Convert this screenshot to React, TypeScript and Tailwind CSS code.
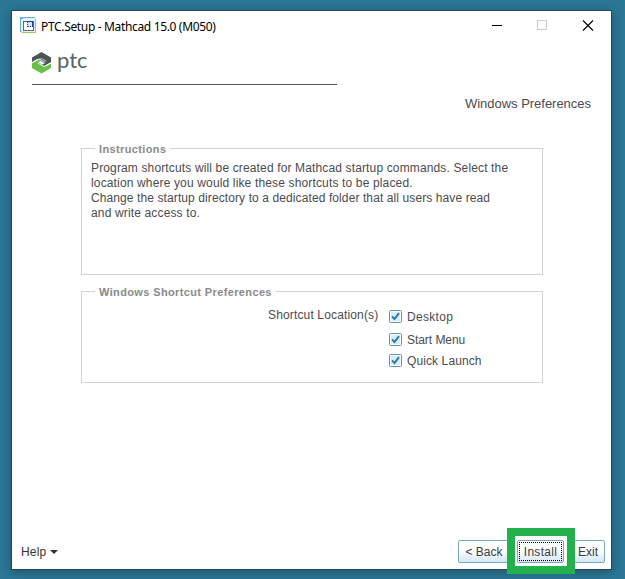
import { type ReactNode } from "react";

const INSTRUCTIONS = [
  { text: "Program shortcuts will be created for Mathcad startup commands. Select the", spacing: "tracking-[0.14px]" },
  { text: "location where you would like these shortcuts to be placed.", spacing: "tracking-[0.15px]" },
  { text: "Change the startup directory to a dedicated folder that all users have read", spacing: "tracking-[0.1px]" },
  { text: "and write access to.", spacing: "tracking-[0.15px]" },
];

const SHORTCUTS = [
  { label: "Desktop", row: "h-[23px] tracking-[0.3px]" },
  { label: "Start Menu", row: "h-[21px] tracking-[-0.05px]" },
  { label: "Quick Launch", row: "h-[21px] tracking-[0.1px]" },
];

function AppIcon() {
  return (
    <svg width="16" height="16" viewBox="0 0 16 16" shapeRendering="crispEdges" className="mb-[2px] shrink-0">
      <rect width="16" height="16" fill="#eaf2f8" />
      <path d="M0 0h15v1H3v1H1v13H0z" fill="#5fb0e0" />
      <path d="M15 2h1v14H2v-1h13z" fill="#93cb62" />
      <path d="M3 4h11v10H3z" fill="#666" />
      <path d="M4 5h9v8H4z" fill="#fff" />
      <path d="M7 4h6v6H7z" fill="#1747a6" />
      <path d="M8 5h4v4H8z" fill="#cfe4ff" />
      <path d="M7 6h1v1H7zM7 8h1v1H7zM9 9h1v1H9zM11 9h1v1h-1z" fill="#cfe4ff" />
    </svg>
  );
}

function PtcMark() {
  return (
    <svg width="19" height="22" viewBox="0 0 19 22">
      <path d="M0 5.4 9.5 0 19 5.4v4.8l-7 4-2.2-1.2 3-1.8L5.2 7.1 0 10.1z" fill="#4b5557" />
      <path d="M19 16.1 9.5 21.5 0 16.1v-4.8l7-4 2.2 1.2-3 1.8 7.6 4.1 5.2-3z" fill="#6abf4b" />
      <path d="M0 10.9 7 6.9l6.2 3.5M19 10.6l-7 4-6.2-3.5" fill="none" stroke="#fff" strokeWidth="0.8" />
      <path d="M7 7.7 9.3 6.5l5 2.6" fill="none" stroke="#fff" strokeWidth="0.6" />
    </svg>
  );
}

function CheckBox() {
  return (
    <svg width="13" height="13" viewBox="0 0 13 13" className="shrink-0">
      <rect x="0.5" y="0.5" width="12" height="12" rx="1" fill="#fff" stroke="#5896b5" />
      <rect x="2" y="2" width="9" height="9" fill="#d9ebf6" />
      <path d="M3 6.3 5.5 9 10 3.2" fill="none" stroke="#257ba5" strokeWidth="1.9" />
    </svg>
  );
}

function Group({ title, className, children }: { title: string; className: string; children: ReactNode }) {
  return (
    <fieldset className={`ml-[69px] w-[462px] border border-[#d2d2d2] ${className}`}>
      <legend className="ml-[13px] px-1 h-[15px] text-[11px] leading-[16px] font-bold tracking-[0.37px] text-[#8a8a8a] whitespace-nowrap">
        {title}
      </legend>
      {children}
    </fieldset>
  );
}

function Button({ className, children }: { className: string; children: ReactNode }) {
  return (
    <button
      className={`h-[23px] pt-[2px] shrink-0 flex items-center justify-center rounded-[2px] border border-[#79a9c1] bg-linear-to-b from-white from-40% to-[#d3e8f5] text-[#3c3c46] whitespace-nowrap ${className}`}
    >
      {children}
    </button>
  );
}

export default function App() {
  return (
    <div className="w-[625px] h-[579px] overflow-hidden bg-[#2b7796] pl-[11px] pt-[10px] font-['Liberation_Sans',sans-serif] text-[12px] leading-[15px] text-[#4b4b50]">
      <div className="relative w-[601px] h-[560px] flex flex-col bg-white border border-[#214957] shadow-[0_2px_10px_rgba(0,0,0,0.3)]">
        <header className="h-[30px] shrink-0 flex items-center pl-[8px] pr-[17px] text-black">
          <AppIcon />
          <span className="ml-[5px] font-['Noto_Sans',sans-serif] text-[12px] tracking-[-0.34px] whitespace-nowrap">
            PTC.Setup - Mathcad 15.0 (M050)
          </span>
          <svg width="102" height="11" viewBox="0 0 102 11" className="ml-auto mb-[1px]">
            <path d="M0 5.5h10" stroke="#000" />
            <rect x="45.5" y="0.5" width="9" height="9" fill="none" stroke="#ccc" />
            <path d="M91 .5l10 10M101 .5l-10 10" stroke="#000" strokeWidth="1.1" />
          </svg>
        </header>

        <div className="ml-[20px] w-[305px] h-[44px] shrink-0 flex items-start pt-[11px] border-b border-[#4b5557]">
          <PtcMark />
          <span className="ml-[6px] -mt-[5px] font-['Lato',sans-serif] text-[22px] leading-[26px] text-[#596366]">ptc</span>
        </div>

        <h1 className="mt-[11px] pr-[20px] h-[16px] shrink-0 text-right text-[13px] leading-[16px] tracking-[-0.02px]">
          Windows Preferences
        </h1>

        <Group title="Instructions" className="mt-[29px] h-[134px] shrink-0">
          <div className="pl-[9px] pt-[5px]">
            {INSTRUCTIONS.map((line) => (
              <p key={line.text} className={`whitespace-nowrap ${line.spacing}`}>{line.text}</p>
            ))}
          </div>
        </Group>

        <Group title="Windows Shortcut Preferences" className="mt-[9px] h-[99px] shrink-0">
          <div className="flex pl-[186px] pt-[9px]">
            <span className="w-[121px] shrink-0 tracking-[0.15px]">Shortcut Location(s)</span>
            <div className="pt-[2px]">
              {SHORTCUTS.map((s) => (
                <label key={s.label} className={`flex items-start gap-[5px] ${s.row}`}>
                  <CheckBox />
                  <span>{s.label}</span>
                </label>
              ))}
            </div>
          </div>
        </Group>

        <footer className="mt-auto h-[29px] shrink-0 flex items-start pl-[9px] pr-[6px]">
          <span className="pt-[5px] flex items-center gap-[4px] text-[#333] tracking-[0.2px]">
            Help
            <svg width="8" height="4" viewBox="0 0 8 4" className="mb-[2px]">
              <path d="M0 0h8L4 4z" fill="#333" />
            </svg>
          </span>
          <div className="ml-auto flex gap-[7px]">
            <Button className="w-[52px]">&lt; Back</Button>
            <Button className="w-[47px] tracking-[0.3px] outline-1 outline-dotted outline-black -outline-offset-3">Install</Button>
            <Button className="w-[34px]">Exit</Button>
          </div>
        </footer>

        {/* highlight around the install button */}
        <div className="absolute left-[495px] top-[517px] w-[68px] h-[46px] border-8 border-[#22b14c]" />
      </div>
    </div>
  );
}
